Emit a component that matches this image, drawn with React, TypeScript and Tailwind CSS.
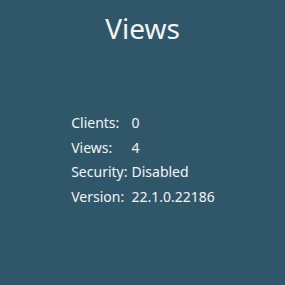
import React from 'react';

const rows: [string, string][] = [
  ['Clients:', '0'],
  ['Views:', '4'],
  ['Security:', 'Disabled'],
  ['Version:', '22.1.0.22186'],
];

export default function App() {
  return (
    <div className="w-[285px] h-[285px] bg-[#30566a] text-[#f2f4f5] font-['Noto_Sans',sans-serif] flex flex-col items-center">
      <h1 className="mt-[8px] text-[28px] leading-[40px] font-normal">Views</h1>
      <table className="mt-[63px] ml-[1px] text-[14px] leading-[24.5px] border-separate border-spacing-0">
        <tbody>
          {rows.map(([label, value]) => (
            <tr key={label}>
              <td className="pr-[4px] align-top">{label}</td>
              <td className="align-top">{value}</td>
            </tr>
          ))}
        </tbody>
      </table>
    </div>
  );
}
